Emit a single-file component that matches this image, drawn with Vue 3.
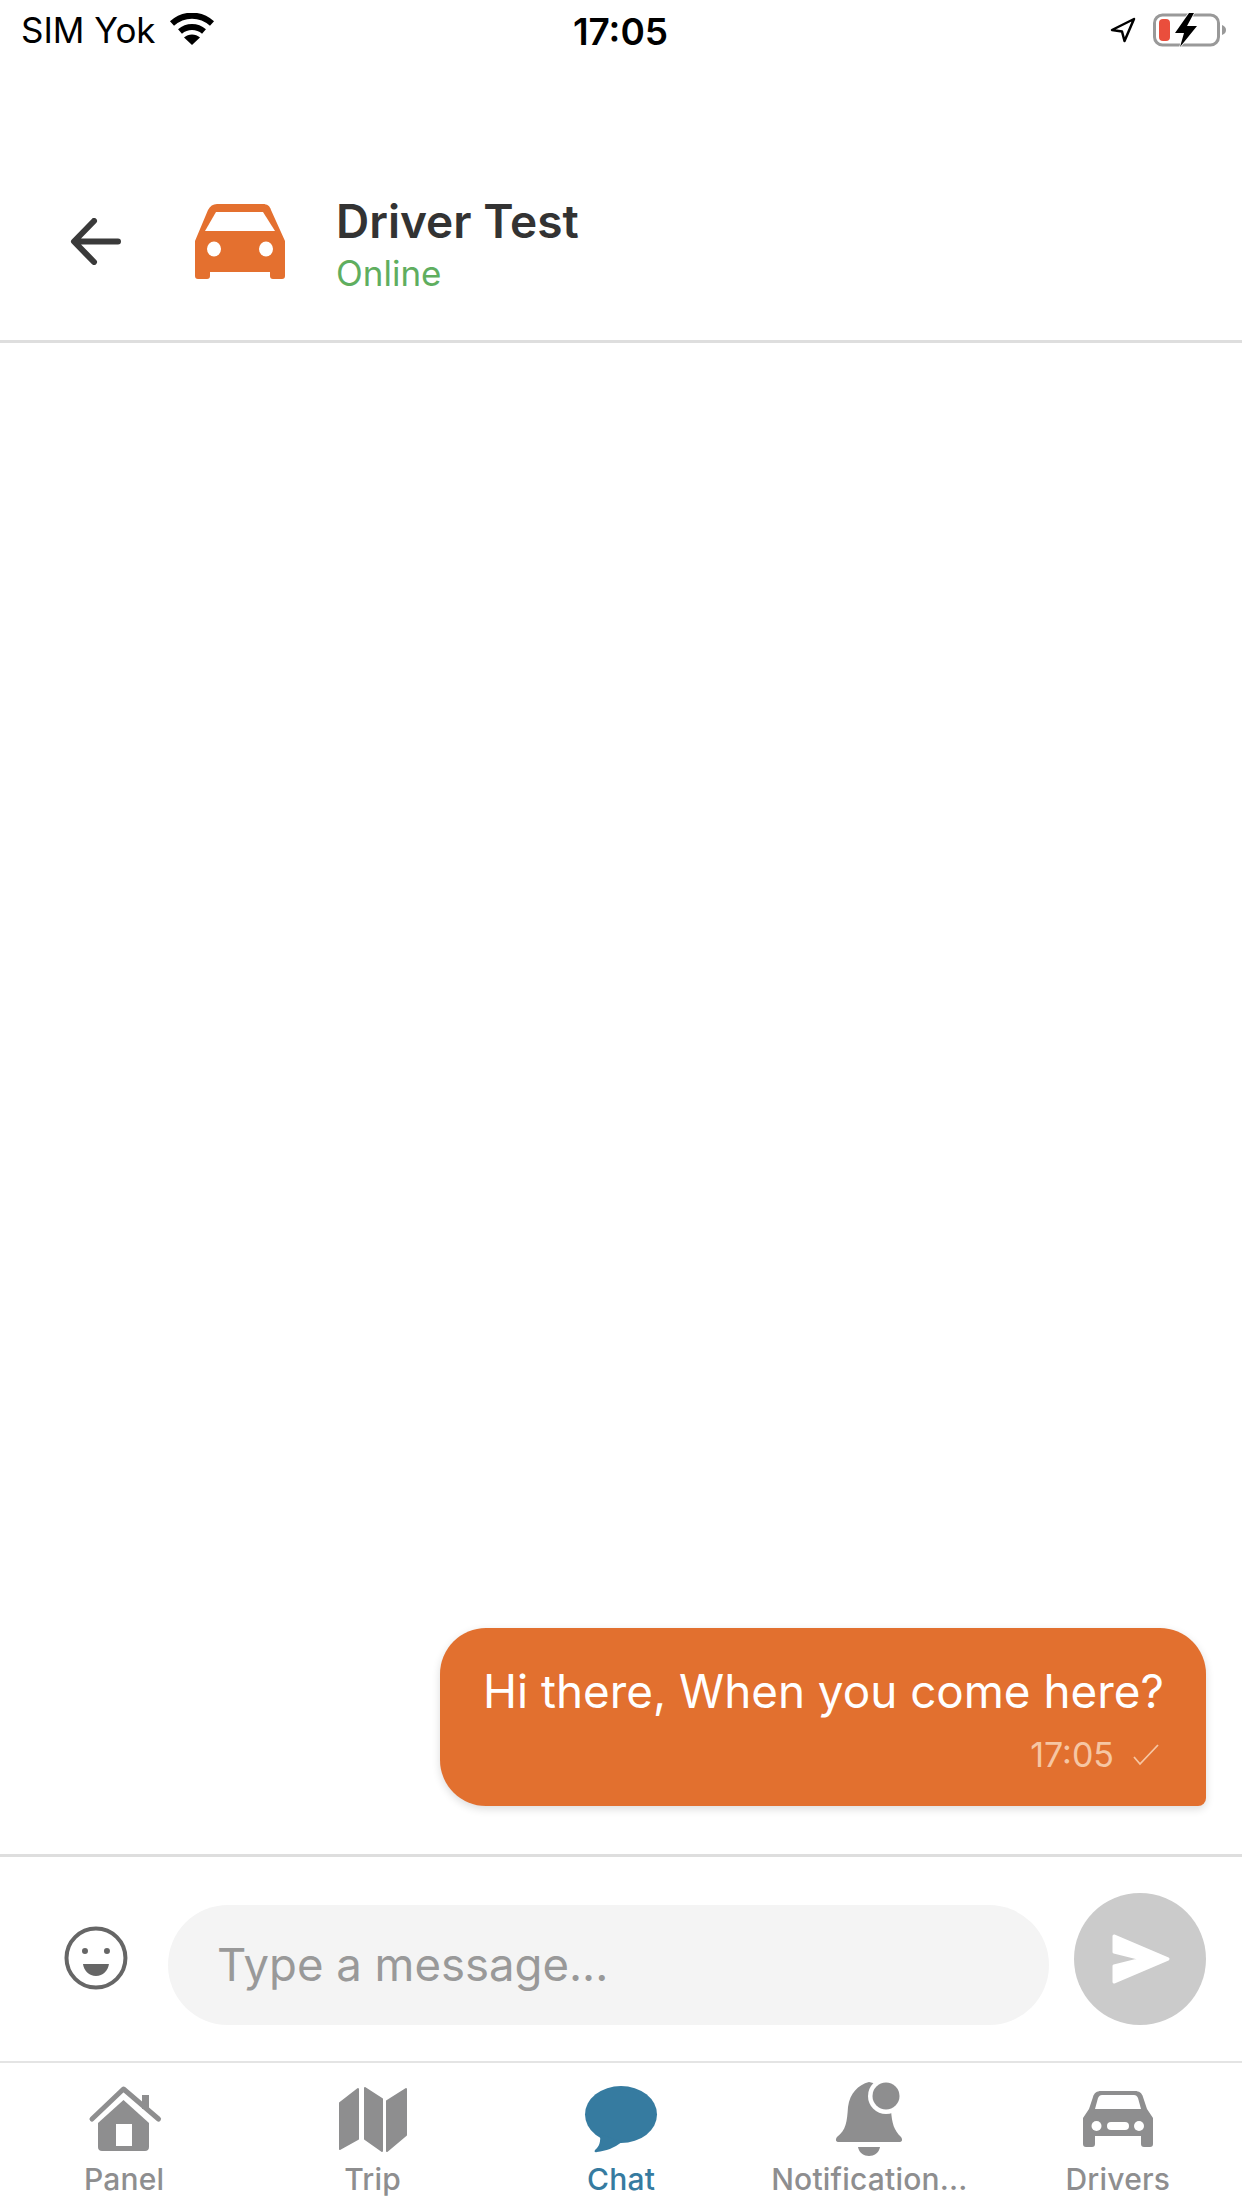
<script setup>
const tabs = [
  { key: 'panel', label: 'Panel' },
  { key: 'trip', label: 'Trip' },
  { key: 'chat', label: 'Chat', active: true },
  { key: 'notifications', label: 'Notification...' },
  { key: 'drivers', label: 'Drivers' }
]
</script>

<template>
  <div class="screen">
    <div class="status-bar">
      <div class="status-left">
        <span class="carrier">SIM Yok</span>
        <svg class="wifi" width="46" height="32" viewBox="0 0 46 32">
          <path d="M3 10.500C14.500 0 31.500 0 43 10.500" fill="none" stroke="#000" stroke-width="6" />
          <path d="M11 18.500C18 12.500 28 12.500 35 18.500" fill="none" stroke="#000" stroke-width="6" />
          <path d="M23 32L15 24.500C19.500 20.500 26.500 20.500 31 24.500Z" fill="#000" />
        </svg>
      </div>
      <span class="clock">17:05</span>
      <div class="status-right">
        <svg width="26" height="26" viewBox="0 0 26 26">
          <path d="M24 2L2 13L12 14.500L14.500 24Z" fill="none" stroke="#000" stroke-width="2.500" stroke-linejoin="round" />
        </svg>
        <svg class="battery" width="74" height="36" viewBox="0 0 74 36">
          <rect x="1.500" y="3" width="64" height="30" rx="8" fill="none" stroke="#999" stroke-width="3" />
          <path d="M69 13C72 14 73 16 73 18C73 20 72 22 69 23Z" fill="#999" />
          <rect x="6" y="7" width="11" height="22" rx="4" fill="#ea4e3c" />
          <path d="M36 1L22 21H31L27 35L44 14H34L41 1Z" fill="#000" stroke="#fff" stroke-width="1.500" paint-order="stroke" />
        </svg>
      </div>
    </div>

    <header class="chat-header">
      <svg class="back" width="51" height="47" viewBox="0 0 51 47">
        <path d="M48 23.500H5M24 3L4 23.500L24 44" fill="none" stroke="#3a3a3a" stroke-width="6" stroke-linecap="round" stroke-linejoin="round" />
      </svg>
      <svg class="avatar" width="90" height="75" viewBox="0 0 90 75">
        <path d="M22 0H68C72 0 75 2 76 6L90 37V72C90 74 89 75 87 75H78C76 75 75 74 75 72V68H15V72C15 74 14 75 12 75H3C1 75 0 74 0 72V37L13 6C15 2 18 0 22 0Z" fill="#e4702f" />
        <path d="M21 8H68L80 27H10Z" fill="#fff" />
        <ellipse cx="19" cy="45" rx="7" ry="7.500" fill="#fff" />
        <ellipse cx="71" cy="45" rx="7" ry="7.500" fill="#fff" />
      </svg>
      <div class="peer">
        <div class="peer-name">Driver Test</div>
        <div class="peer-state">Online</div>
      </div>
    </header>

    <main class="messages">
      <div class="bubble">
        <div class="bubble-text">Hi there, When you come here?</div>
        <div class="bubble-meta">
          <span>17:05</span>
          <svg width="26" height="22" viewBox="0 0 26 22">
            <path d="M1 13L7 20L25 1" fill="none" stroke="#f6c6a3" stroke-width="1.800" />
          </svg>
        </div>
      </div>
    </main>

    <section class="composer">
      <svg class="emoji" width="64" height="64" viewBox="0 0 64 64">
        <circle cx="32" cy="32" r="29.500" fill="none" stroke="#666" stroke-width="4" />
        <circle cx="21" cy="25" r="3" fill="#666" />
        <circle cx="43" cy="25" r="3" fill="#666" />
        <path d="M19 38H45C44 45 39 50 32 50C25 50 20 45 19 38Z" fill="#666" />
      </svg>
      <div class="message-input">
        <span>Type a message...</span>
      </div>
      <div class="send">
        <svg width="58" height="50" viewBox="0 0 58 50">
          <path d="M2 2L56 25L2 48V32L30 25L2 18Z" fill="#fff" stroke="#fff" stroke-width="3" stroke-linejoin="round" />
        </svg>
      </div>
    </section>

    <nav class="tabbar">
      <div v-for="tab in tabs" :key="tab.key" class="tab" :class="{ active: tab.active }">
        <svg class="tab-icon" width="82" height="76" viewBox="0 0 82 76">
          <g v-if="tab.key === 'panel'">
            <path d="M9 37L40.500 7L75.500 37" fill="none" stroke="currentColor" stroke-width="5" stroke-linecap="round" stroke-linejoin="round" />
            <path d="M59 13H66V27H59Z" fill="currentColor" />
            <path d="M40.500 18L66 41V65C66 67.500 64.500 69 62 69H19C16.500 69 15 67.500 15 65V41Z" fill="currentColor" />
            <rect x="33" y="42" width="16" height="22" fill="#fff" />
          </g>
          <g v-else-if="tab.key === 'trip'" fill="currentColor" stroke="currentColor" stroke-width="2" stroke-linejoin="round">
            <path d="M8 21L26 7V57L8 67Z" />
            <path d="M33 6L50 17V69L33 57Z" />
            <path d="M55 19L74 7V53L55 69Z" />
          </g>
          <g v-else-if="tab.key === 'chat'" fill="currentColor">
            <ellipse cx="41" cy="32.500" rx="36" ry="28.500" />
            <path d="M20 52C21 60 19 65 15 68C14 70 15 70.500 17 70C26 69 34 66 42 60Z" />
          </g>
          <g v-else-if="tab.key === 'notifications'">
            <path d="M41 0C30 3 22 11 20 25C19 40 18 48 9 55C7 58 8 60 11 60H71C74 60 75 58 73 55C66 48 64 42 63 28C62 12 52 2 41 0Z" fill="currentColor" />
            <path d="M30 65H52C51 71 46 74 41 74C36 74 31 71 30 65Z" fill="currentColor" />
            <circle cx="58" cy="14" r="18" fill="#fff" />
            <circle cx="58" cy="14" r="13.500" fill="currentColor" />
          </g>
          <g v-else>
            <path d="M24 9H58C62 9 65 11 66 15L70 27L76 36V62C76 64 75 65 73 65H67C65 65 64 64 64 62V54H18V62C18 64 17 65 15 65H9C7 65 6 64 6 62V36L12 27L16 15C17 11 20 9 24 9Z" fill="currentColor" />
            <path d="M25 13H57C59 13 60 14 61 16L64 27H18L21 16C22 14 23 13 25 13Z" fill="#fff" />
            <circle cx="19.500" cy="44" r="5" fill="#fff" />
            <circle cx="62" cy="44" r="5" fill="#fff" />
            <rect x="30" y="40" width="22" height="8" rx="4" fill="#fff" />
          </g>
        </svg>
        <span class="tab-label">{{ tab.label }}</span>
      </div>
    </nav>
  </div>
</template>

<style scoped>
.screen {
  width: 1242px;
  height: 2208px;
  display: flex;
  flex-direction: column;
  background: #fff;
  font-family: Inter, "Liberation Sans", sans-serif;
  overflow: hidden;
}

.status-bar {
  height: 60px;
  flex: none;
  display: grid;
  grid-template-columns: 1fr auto 1fr;
  align-items: center;
  padding: 0 15px 0 21px;
  box-sizing: border-box;
  color: #000;
}

.status-left {
  display: flex;
  align-items: center;
  gap: 13px;
}

.carrier {
  font-size: 35px;
}

.wifi {
  margin-top: -2px;
}

.clock {
  font-size: 37px;
  font-weight: 600;
  margin: 2px 7px 0 0;
}

.status-right {
  display: flex;
  align-items: center;
  justify-content: flex-end;
  gap: 17px;
}

.chat-header {
  height: 283px;
  flex: none;
  padding: 144px 0 0 70px;
  box-sizing: border-box;
  display: flex;
  align-items: flex-start;
  border-bottom: 3px solid #dedede;
}

.back {
  margin-top: 14px;
}

.avatar {
  margin-left: 74px;
}

.peer {
  margin-left: 51px;
  margin-top: -10px;
}

.peer-name {
  font-size: 46px;
  font-weight: 600;
  line-height: 54px;
  color: #333;
}

.peer-state {
  font-size: 35px;
  line-height: 44px;
  color: #5fae5f;
  margin-top: 3px;
}

.messages {
  flex: 1;
  display: flex;
  justify-content: flex-end;
  align-items: flex-end;
  padding: 0 36px 48px 0;
}

.bubble {
  width: 766px;
  height: 178px;
  box-sizing: border-box;
  padding: 36px 47px 0 43px;
  background: #e2702f;
  border-radius: 46px 46px 8px 46px;
  box-shadow: 0 3px 8px rgba(0, 0, 0, 0.14);
  color: #fff;
}

.bubble-text {
  font-size: 45.800px;
  line-height: 56px;
  white-space: nowrap;
}

.bubble-meta {
  display: flex;
  justify-content: flex-end;
  align-items: center;
  gap: 19px;
  margin-top: 15px;
  font-size: 34px;
  line-height: 40px;
  color: #f6c6a3;
}

.composer {
  height: 207px;
  flex: none;
  box-sizing: border-box;
  border-top: 3px solid #dedede;
  padding: 0 36px 36px 64px;
  display: flex;
  align-items: flex-end;
}

.emoji {
  margin-bottom: 35px;
}

.message-input {
  width: 882px;
  height: 120px;
  margin-left: 40px;
  padding: 0 0 2px 49px;
  box-sizing: border-box;
  display: flex;
  align-items: center;
  background: #f4f4f4;
  border-radius: 60px;
  font-size: 45.500px;
  color: #999;
}

.send {
  width: 132px;
  height: 132px;
  margin-left: 25px;
  border-radius: 50%;
  background: #cbcbcb;
  display: flex;
  align-items: center;
  justify-content: center;
}

.send svg {
  margin-left: 2px;
}

.tabbar {
  height: 147px;
  flex: none;
  box-sizing: border-box;
  border-top: 2px solid #e4e4e4;
  padding-top: 19px;
  display: flex;
}

.tab {
  flex: 1;
  display: flex;
  flex-direction: column;
  align-items: center;
  color: #8e8e8f;
}

.tab.active {
  color: #367ba0;
}

.tab-icon {
  display: block;
}

.tab-label {
  font-size: 30px;
  line-height: 36px;
  font-weight: 500;
  letter-spacing: 0.2px;
  margin-top: 3px;
  white-space: nowrap;
}
</style>
